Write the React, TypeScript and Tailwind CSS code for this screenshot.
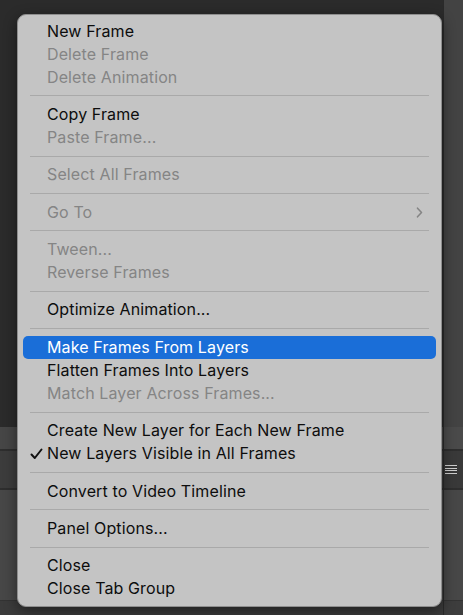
import React from 'react';

type Entry =
  | { kind: 'item'; label: string; disabled?: boolean; active?: boolean; checked?: boolean; submenu?: boolean }
  | { kind: 'sep' };

const MENU: Entry[] = [
  { kind: 'item', label: 'New Frame' },
  { kind: 'item', label: 'Delete Frame', disabled: true },
  { kind: 'item', label: 'Delete Animation', disabled: true },
  { kind: 'sep' },
  { kind: 'item', label: 'Copy Frame' },
  { kind: 'item', label: 'Paste Frame...', disabled: true },
  { kind: 'sep' },
  { kind: 'item', label: 'Select All Frames', disabled: true },
  { kind: 'sep' },
  { kind: 'item', label: 'Go To', disabled: true, submenu: true },
  { kind: 'sep' },
  { kind: 'item', label: 'Tween...', disabled: true },
  { kind: 'item', label: 'Reverse Frames', disabled: true },
  { kind: 'sep' },
  { kind: 'item', label: 'Optimize Animation...' },
  { kind: 'sep' },
  { kind: 'item', label: 'Make Frames From Layers', active: true },
  { kind: 'item', label: 'Flatten Frames Into Layers' },
  { kind: 'item', label: 'Match Layer Across Frames...', disabled: true },
  { kind: 'sep' },
  { kind: 'item', label: 'Create New Layer for Each New Frame' },
  { kind: 'item', label: 'New Layers Visible in All Frames', checked: true },
  { kind: 'sep' },
  { kind: 'item', label: 'Convert to Video Timeline' },
  { kind: 'sep' },
  { kind: 'item', label: 'Panel Options...' },
  { kind: 'sep' },
  { kind: 'item', label: 'Close' },
  { kind: 'item', label: 'Close Tab Group' },
];

function MenuRow({ e }: { e: Extract<Entry, { kind: 'item' }> }) {
  const color = e.active ? 'text-white' : e.disabled ? 'text-[#858585]' : 'text-[#0d0d0d]';
  return (
    <div
      className={`relative mx-[5px] flex h-[23px] items-center rounded-[5px] pl-[24px] pr-[14px] ${
        e.active ? 'bg-[#1a6ed8]' : ''
      } ${color}`}
    >
      {e.checked && (
        <svg className="absolute left-[7px] top-[6px]" width="13" height="12" viewBox="0 0 13 12" fill="none">
          <path d="M1.5 6.5 L4.8 10 L11.5 1.5" stroke="#111" strokeWidth="2" strokeLinecap="round" strokeLinejoin="round" />
        </svg>
      )}
      <span className="flex-1 text-[16px] leading-[23px] tracking-[0.12px]">{e.label}</span>
      {e.submenu && (
        <svg width="7" height="11" viewBox="0 0 7 11" fill="none" className="mr-[-1px]">
          <path d="M1.5 1.2 L5.5 5.5 L1.5 9.8" stroke="#858585" strokeWidth="1.6" strokeLinecap="round" strokeLinejoin="round" />
        </svg>
      )}
    </div>
  );
}

export default function App() {
  return (
    <div
      className="relative flex h-[615px] w-[463px] overflow-hidden bg-[#2b2b2b]"
      style={{ fontFamily: 'Inter, "Liberation Sans", sans-serif' }}
    >
      {/* backdrop: photoshop panels */}
      <div className="flex w-[443px] flex-col">
        <div className="h-[427px] bg-[#2b2b2b]" />
        <div className="h-[22px] bg-[#464646]" />
        <div className="h-[2px] bg-[#2e2e2e]" />
        <div className="h-[37px] bg-[#3c3c3c]" />
        <div className="h-[2px] bg-[#2e2e2e]" />
        <div className="flex-1 bg-[#474747]" />
        <div className="h-px bg-[#333]" />
        <div className="h-[14px] bg-[#3b3b3b]" />
      </div>
      <div className="flex w-[20px] flex-col border-l border-[#2a2a2a]">
        <div className="h-[427px] bg-[#434343]" />
        <div className="h-[22px] bg-[#4a4a4a]" />
        <div className="h-[2px] bg-[#2e2e2e]" />
        <div className="flex h-[37px] items-center bg-[#393939] pl-[1px]">
          <div className="flex w-[12px] flex-col gap-[1.5px]">
            <div className="h-px bg-[#d0d0d0]" />
            <div className="h-px bg-[#d0d0d0]" />
            <div className="h-px bg-[#d0d0d0]" />
            <div className="h-px bg-[#d0d0d0]" />
          </div>
        </div>
        <div className="h-[2px] bg-[#2e2e2e]" />
        <div className="flex-1 bg-[#474747]" />
        <div className="h-px bg-[#333]" />
        <div className="h-[14px] bg-[#3d3d3d]" />
      </div>

      {/* context menu */}
      <div className="absolute left-[17px] top-[14px] h-[593px] w-[425px] rounded-[9px] border border-[#8e8e8e] bg-[#c4c4c4] pb-[6px] pt-[4.5px] shadow-[0_4px_14px_rgba(0,0,0,0.45)]">
        {MENU.map((e, i) =>
          e.kind === 'sep' ? (
            <div key={i} className="flex h-[14.4px] items-center px-[12px]">
              <div className="h-px w-full bg-[#a9a9a9]" />
            </div>
          ) : (
            <MenuRow key={i} e={e} />
          ),
        )}
      </div>
    </div>
  );
}
